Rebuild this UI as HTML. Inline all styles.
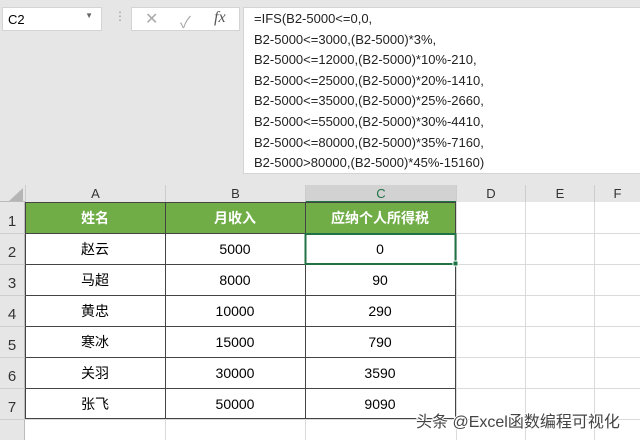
<html><head><style>
body{margin:0;width:640px;height:440px;background:#fff;font-family:"Liberation Sans","Noto Sans CJK SC",sans-serif;position:relative;overflow:hidden}
.a{position:absolute;box-sizing:border-box}
.hd{background:#e6e6e6;color:#333;font-size:13px;text-align:center}
</style></head><body>
<div class="a" style="left:0;top:0;width:640px;height:185px;background:#e6e6e6"></div>
<div class="a" style="left:2px;top:7px;width:100px;height:24px;background:#fff;border:1px solid #d4d4d4;font-size:13px;padding:4px 0 0 5px">C2<span style="position:absolute;right:8px;top:3px;font-size:8px;color:#666">▼</span></div>
<div class="a" style="left:114px;top:9px;color:#999;font-size:12px">⋮</div>
<div class="a" style="left:131px;top:7px;width:109px;height:24px;background:#fff;border:1px solid #d4d4d4;color:#aaa;font-size:16px">
<span style="position:absolute;left:13px;top:1px">✕</span><span style="position:absolute;left:48px;top:1px">✓</span><span style="position:absolute;left:82px;top:1px;font-family:'Liberation Serif',serif;font-style:italic;color:#555">fx</span></div>
<div class="a" style="left:243px;top:7px;width:400px;height:167px;background:#fff;border:1px solid #d4d4d4;font-size:13px;color:#222;line-height:20.6px;padding:1px 0 0 10px;white-space:pre">=IFS(B2-5000&lt;=0,0,
B2-5000&lt;=3000,(B2-5000)*3%,
B2-5000&lt;=12000,(B2-5000)*10%-210,
B2-5000&lt;=25000,(B2-5000)*20%-1410,
B2-5000&lt;=35000,(B2-5000)*25%-2660,
B2-5000&lt;=55000,(B2-5000)*30%-4410,
B2-5000&lt;=80000,(B2-5000)*35%-7160,
B2-5000&gt;80000,(B2-5000)*45%-15160)</div>
<div class="a hd" style="left:0;top:185px;width:640px;height:17px;border-bottom:1px solid #bbb"></div>
<div class="a" style="left:9px;top:188px;width:0;height:0;border-left:14px solid transparent;border-bottom:13px solid #b5b5b5"></div>
<div class="a hd" style="left:25px;top:185px;width:140px;height:17px;border-left:1px solid #ccc;line-height:17px">A</div>
<div class="a hd" style="left:165px;top:185px;width:140px;height:17px;border-left:1px solid #ccc;line-height:17px">B</div>
<div class="a hd" style="left:305px;top:185px;width:151px;height:18px;background:#d2d2d2;border-left:1px solid #ccc;border-bottom:2px solid #217346;line-height:17px;color:#217346">C</div>
<div class="a hd" style="left:456px;top:185px;width:69px;height:17px;border-left:1px solid #ccc;line-height:17px">D</div>
<div class="a hd" style="left:525px;top:185px;width:69px;height:17px;border-left:1px solid #ccc;line-height:17px">E</div>
<div class="a hd" style="left:594px;top:185px;width:46px;height:17px;border-left:1px solid #ccc;line-height:17px">F</div>
<div class="a" style="left:0;top:202px;width:25px;height:238px;background:#e6e6e6;border-right:1px solid #bbb"></div>
<svg class="a" style="left:0;top:202px" width="640" height="238">
<g stroke="#dadada" stroke-width="1">
<line x1="456.5" y1="0" x2="456.5" y2="238"/><line x1="525.5" y1="0" x2="525.5" y2="238"/><line x1="594.5" y1="0" x2="594.5" y2="238"/>
<line x1="25" y1="217.5" x2="640" y2="217.5"/>
<line x1="456" y1="31.5" x2="640" y2="31.5"/><line x1="456" y1="62.5" x2="640" y2="62.5"/><line x1="456" y1="93.5" x2="640" y2="93.5"/><line x1="456" y1="124.5" x2="640" y2="124.5"/><line x1="456" y1="155.5" x2="640" y2="155.5"/><line x1="456" y1="186.5" x2="640" y2="186.5"/>
<line x1="165.5" y1="217" x2="165.5" y2="238"/><line x1="305.5" y1="217" x2="305.5" y2="238"/>
</g>
<g stroke="#cfcfcf"><line x1="0" y1="31.5" x2="25" y2="31.5"/><line x1="0" y1="62.5" x2="25" y2="62.5"/><line x1="0" y1="93.5" x2="25" y2="93.5"/><line x1="0" y1="124.5" x2="25" y2="124.5"/><line x1="0" y1="155.5" x2="25" y2="155.5"/><line x1="0" y1="186.5" x2="25" y2="186.5"/><line x1="0" y1="217.5" x2="25" y2="217.5"/></g>
<rect x="25" y="0" width="431" height="31" fill="#70ad47"/>
<g stroke="#444" stroke-width="1" fill="none">
<rect x="25.5" y="0.5" width="430" height="216"/>
<line x1="165.5" y1="0" x2="165.5" y2="217"/><line x1="305.5" y1="0" x2="305.5" y2="217"/>
<line x1="25" y1="31.5" x2="456" y2="31.5"/><line x1="25" y1="62.5" x2="456" y2="62.5"/><line x1="25" y1="93.5" x2="456" y2="93.5"/><line x1="25" y1="124.5" x2="456" y2="124.5"/><line x1="25" y1="155.5" x2="456" y2="155.5"/><line x1="25" y1="186.5" x2="456" y2="186.5"/>
</g>
<rect x="305.5" y="32" width="150" height="30" fill="none" stroke="#217346" stroke-width="2"/>
<rect x="453" y="59" width="5" height="5" fill="#217346" stroke="#fff" stroke-width="1"/>
<g font-family="Liberation Sans, sans-serif" font-size="15" fill="#333" text-anchor="middle">
<text x="12" y="24">1</text><text x="12" y="55">2</text><text x="12" y="86">3</text><text x="12" y="117">4</text><text x="12" y="148">5</text><text x="12" y="179">6</text><text x="12" y="210">7</text></g>
<g font-family="Liberation Sans, Noto Sans CJK SC, sans-serif" font-size="14" font-weight="bold" fill="#fff" text-anchor="middle">
<text x="95" y="21">姓名</text><text x="235" y="21">月收入</text><text x="380" y="21">应纳个人所得税</text></g>
<g font-family="Liberation Sans, Noto Sans CJK SC, sans-serif" font-size="14" fill="#000" text-anchor="middle">
<text x="95" y="52">赵云</text><text x="235" y="52">5000</text><text x="380" y="52">0</text>
<text x="95" y="83">马超</text><text x="235" y="83">8000</text><text x="380" y="83">90</text>
<text x="95" y="114">黄忠</text><text x="235" y="114">10000</text><text x="380" y="114">290</text>
<text x="95" y="145">寒冰</text><text x="235" y="145">15000</text><text x="380" y="145">790</text>
<text x="95" y="176">关羽</text><text x="235" y="176">30000</text><text x="380" y="176">3590</text>
<text x="95" y="207">张飞</text><text x="235" y="207">50000</text><text x="380" y="207">9090</text></g>
<text x="416" y="225" font-family="Liberation Sans, Noto Sans CJK SC, sans-serif" font-size="16" fill="#444" stroke="#fff" stroke-width="2" paint-order="stroke">头条 @Excel函数编程可视化</text>
</svg>
</body></html>
